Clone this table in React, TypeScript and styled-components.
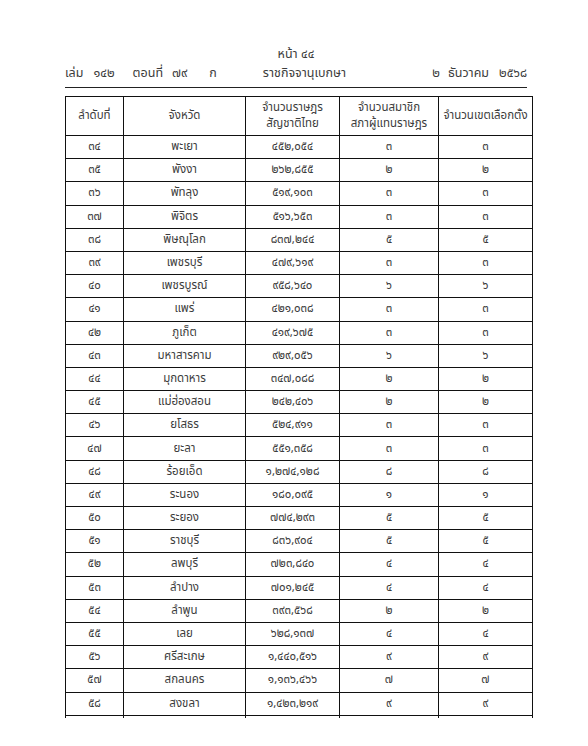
import React from "react";
import styled, { createGlobalStyle } from "styled-components";

const Global = createGlobalStyle`
  html, body { margin: 0; padding: 0; background: #fff; }
  body { font-family: "Noto Sans Thai", "Loma", "Garuda", "Noto Sans", "DejaVu Sans", sans-serif; color: #3c3c3c; }
`;

const Page = styled.div`
  width: 588px;
  height: 746px;
  box-sizing: border-box;
  padding: 46px 0 0 65px;
  background: #fff;
  overflow: hidden;
`;

const Sheet = styled.div`
  width: 462px;
`;

const PageNo = styled.div`
  text-align: center;
  font-size: 12.5px;
  line-height: 18px;
  height: 18px;
`;

const RunHead = styled.div`
  display: flex;
  align-items: center;
  font-size: 12.5px;
  line-height: 20px;
  height: 20px;
  padding-bottom: 3px;
  border-bottom: 1.2px solid #222;
  margin-bottom: 8px;
`;

const Seg = styled.span<{ $ml?: number }>`
  margin-left: ${(p) => p.$ml ?? 0}px;
  white-space: nowrap;
`;

const Spacer = styled.span`
  flex: 1;
`;

const Table = styled.table`
  border-collapse: collapse;
  width: 462px;
  table-layout: fixed;
  font-size: 11.5px;
`;

const Th = styled.th<{ $w: number }>`
  width: ${(p) => p.$w}px;
  border: 1.2px solid #111;
  font-weight: 400;
  height: 38px;
  padding: 0;
  line-height: 16px;
  text-align: center;
  vertical-align: middle;
`;

const Td = styled.td`
  border: 1.2px solid #111;
  height: 22.2px;
  padding: 0;
  text-align: center;
  vertical-align: middle;
  line-height: 16px;
`;

const TailTd = styled.td`
  border-left: 1.2px solid #111;
  border-right: 1.2px solid #111;
  border-top: 1.2px solid #111;
  border-bottom: none;
  height: 2px;
  padding: 0;
`;

const rows: [string, string, string, string, string][] = [
  ["๓๔", "พะเยา", "๔๕๒,๐๕๔", "๓", "๓"],
  ["๓๕", "พังงา", "๒๖๒,๘๕๕", "๒", "๒"],
  ["๓๖", "พัทลุง", "๕๑๙,๑๐๓", "๓", "๓"],
  ["๓๗", "พิจิตร", "๕๑๖,๖๕๓", "๓", "๓"],
  ["๓๘", "พิษณุโลก", "๘๓๗,๒๔๔", "๕", "๕"],
  ["๓๙", "เพชรบุรี", "๔๗๙,๖๑๙", "๓", "๓"],
  ["๔๐", "เพชรบูรณ์", "๙๕๘,๖๔๐", "๖", "๖"],
  ["๔๑", "แพร่", "๔๒๑,๐๓๘", "๓", "๓"],
  ["๔๒", "ภูเก็ต", "๔๑๙,๖๗๕", "๓", "๓"],
  ["๔๓", "มหาสารคาม", "๙๒๙,๐๕๖", "๖", "๖"],
  ["๔๔", "มุกดาหาร", "๓๔๗,๐๘๘", "๒", "๒"],
  ["๔๕", "แม่ฮ่องสอน", "๒๔๒,๔๐๖", "๒", "๒"],
  ["๔๖", "ยโสธร", "๕๒๔,๙๑๑", "๓", "๓"],
  ["๔๗", "ยะลา", "๕๕๑,๓๕๘", "๓", "๓"],
  ["๔๘", "ร้อยเอ็ด", "๑,๒๗๔,๑๒๘", "๘", "๘"],
  ["๔๙", "ระนอง", "๑๘๐,๐๙๕", "๑", "๑"],
  ["๕๐", "ระยอง", "๗๗๔,๒๙๓", "๕", "๕"],
  ["๕๑", "ราชบุรี", "๘๓๖,๙๐๔", "๕", "๕"],
  ["๕๒", "ลพบุรี", "๗๒๓,๘๔๐", "๔", "๔"],
  ["๕๓", "ลำปาง", "๗๐๑,๒๔๕", "๔", "๔"],
  ["๕๔", "ลำพูน", "๓๙๓,๕๖๘", "๒", "๒"],
  ["๕๕", "เลย", "๖๒๘,๑๓๗", "๔", "๔"],
  ["๕๖", "ศรีสะเกษ", "๑,๔๔๐,๕๑๖", "๙", "๙"],
  ["๕๗", "สกลนคร", "๑,๑๓๖,๔๖๖", "๗", "๗"],
  ["๕๘", "สงขลา", "๑,๔๒๓,๒๑๙", "๙", "๙"],
];

export default function App() {
  return (
    <>
      <Global />
      <Page>
        <Sheet>
          <PageNo>หน้า ๔๔</PageNo>
          <RunHead>
            <Seg>เล่ม</Seg>
            <Seg $ml={10}>๑๔๒</Seg>
            <Seg $ml={18}>ตอนที่</Seg>
            <Seg $ml={9}>๗๙</Seg>
            <Seg $ml={22}>ก</Seg>
            <Seg $ml={46}>ราชกิจจานุเบกษา</Seg>
            <Spacer />
            <Seg>๒</Seg>
            <Seg $ml={8}>ธันวาคม</Seg>
            <Seg $ml={10}>๒๕๖๘</Seg>
          </RunHead>
          <Table>
            <thead>
              <tr>
                <Th $w={57}>ลำดับที่</Th>
                <Th $w={121}>จังหวัด</Th>
                <Th $w={93}>
                  จำนวนราษฎร
                  <br />
                  สัญชาติไทย
                </Th>
                <Th $w={98}>
                  จำนวนสมาชิก
                  <br />
                  สภาผู้แทนราษฎร
                </Th>
                <Th $w={93}>จำนวนเขตเลือกตั้ง</Th>
              </tr>
            </thead>
            <tbody>
              {rows.map((r) => (
                <tr key={r[0]}>
                  {r.map((c, i) => (
                    <Td key={i}>{c}</Td>
                  ))}
                </tr>
              ))}
              <tr>
                {[0, 1, 2, 3, 4].map((i) => (
                  <TailTd key={i} />
                ))}
              </tr>
            </tbody>
          </Table>
        </Sheet>
      </Page>
    </>
  );
}
